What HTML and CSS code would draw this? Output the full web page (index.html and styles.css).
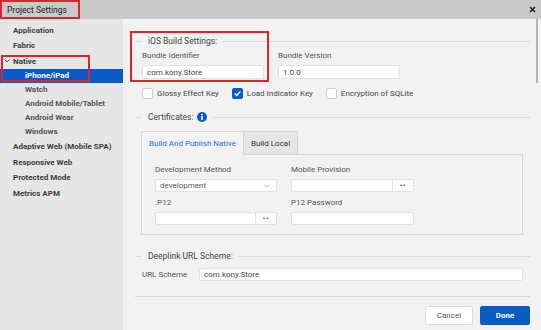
FILE: index.html
```html
<!DOCTYPE html>
<html lang="en">
<head>
  <meta charset="UTF-8">
  <title>Project Settings</title>
  <link rel="stylesheet" href="styles.css">
</head>
<body>

<div class="dialog">
  <div class="titlebar">
    <span class="title">Project Settings</span>
    <svg class="close" width="7" height="7" viewBox="0 0 7 7">
      <path d="M1 1 L6 6 M6 1 L1 6" stroke="#222" stroke-width="1.6"/>
    </svg>
  </div>

  <div class="main">
    <nav class="sidebar">
      <div class="nav-item">Application</div>
      <div class="nav-item">Fabric</div>
      <div class="nav-item native">
        <svg class="caret" width="6" height="4" viewBox="0 0 6 4">
          <path d="M0.5 0.5 L3 3 L5.5 0.5" fill="none" stroke="#555" stroke-width="1"/>
        </svg>Native
      </div>
      <div class="nav-sub selected">iPhone/iPad</div>
      <div class="nav-sub">Watch</div>
      <div class="nav-sub">Android Mobile/Tablet</div>
      <div class="nav-sub">Android Wear</div>
      <div class="nav-sub">Windows</div>
      <div class="nav-item">Adaptive Web (Mobile SPA)</div>
      <div class="nav-item">Responsive Web</div>
      <div class="nav-item">Protected Mode</div>
      <div class="nav-item">Metrics APM</div>
      <div class="mark mark-native"></div>
    </nav>

    <section class="content">
      <div class="legend"><span>iOS Build Settings:</span></div>
      <div class="field-row">
        <div class="field">
          <label>Bundle Identifier</label>
          <div class="input">com.kony.Store</div>
        </div>
        <div class="field">
          <label>Bundle Version</label>
          <div class="input">1.0.0</div>
        </div>
      </div>
      <div class="check-row">
        <span class="check"></span><span class="check-text">Glossy Effect Key</span>
        <span class="check checked">
          <svg width="9" height="9" viewBox="0 0 9 9"><path d="M1.8 4.6 L3.7 6.4 L7.3 2.6" fill="none" stroke="#fff" stroke-width="1.4"/></svg>
        </span><span class="check-text">Load Indicator Key</span>
        <span class="check"></span><span class="check-text">Encryption of SQLite</span>
      </div>

      <div class="legend legend-cert">
        <span>Certificates:
          <svg class="info" width="10" height="10" viewBox="0 0 10 10">
            <circle cx="5" cy="5" r="5" fill="#0b5bc7"/>
            <rect x="4.2" y="4.1" width="1.6" height="3.8" fill="#fff"/>
            <circle cx="5" cy="2.6" r="0.9" fill="#fff"/>
          </svg>
        </span>
      </div>

      <div class="tabs-panel">
        <div class="tabs">
          <div class="tab active">Build And Publish Native</div>
          <div class="tab">Build Local</div>
          <div class="tab-fill"></div>
        </div>
        <div class="panel-body">
          <div class="panel-row">
            <div class="field">
              <label>Development Method</label>
              <div class="input select">development
                <svg class="chev" width="6" height="4" viewBox="0 0 6 4"><path d="M0.5 0.5 L3 3 L5.5 0.5" fill="none" stroke="#bbb" stroke-width="0.9"/></svg>
              </div>
            </div>
            <div class="field wide">
              <label>Mobile Provision</label>
              <div class="input browse"><span class="fill"></span><span class="dots">••</span></div>
            </div>
          </div>
          <div class="panel-row">
            <div class="field">
              <label>.P12</label>
              <div class="input browse"><span class="fill"></span><span class="dots">••</span></div>
            </div>
            <div class="field wide">
              <label>P12 Password</label>
              <div class="input"></div>
            </div>
          </div>
        </div>
      </div>

      <div class="legend legend-deep"><span>Deeplink URL Scheme:</span></div>
      <div class="url-row">
        <label>URL Scheme</label>
        <div class="input url">com.kony.Store</div>
      </div>

      <div class="divider"></div>

      <div class="footer">
        <button class="btn cancel">Cancel</button>
        <button class="btn done">Done</button>
      </div>

      <div class="mark mark-ios"></div>
    </section>

    <div class="scrollbar"></div>
  </div>
</div>

</body>
</html>
```

FILE: styles.css
```css
body {
  margin: 0;
  font-family: Roboto, "Liberation Sans", sans-serif;
  background: #f2f2f2;
}

.dialog {
  width: 541px;
  height: 330px;
  display: flex;
  flex-direction: column;
  overflow: hidden;
}

.titlebar {
  height: 19px;
  background: #c9c9c9;
  display: flex;
  align-items: center;
  justify-content: space-between;
  padding-right: 5px;
}

.title {
  box-sizing: border-box;
  width: 80px;
  height: 19px;
  border: 2px solid #e3232b;
  padding-left: 5px;
  display: flex;
  align-items: center;
  font-size: 8.5px;
  color: #222;
}

.main {
  flex: 1;
  display: flex;
  position: relative;
}

/* sidebar */
.sidebar {
  width: 123px;
  background: #e6e6e6;
  padding-top: 3.25px;
  position: relative;
}

.nav-item,
.nav-sub {
  display: flex;
  align-items: center;
  font-size: 8px;
  font-weight: bold;
  color: #3d3d3d;
  white-space: nowrap;
}

.nav-item {
  height: 15.5px;
  padding-left: 13px;
}

.nav-item.native {
  padding-left: 4px;
}

.caret {
  margin-right: 3px;
}

.nav-sub {
  height: 14px;
  padding-left: 25px;
  color: #555;
}

.nav-sub.selected {
  background: #0b5bc7;
  color: #fff;
}

.mark {
  position: absolute;
  border: 2px solid #e3232b;
  box-sizing: border-box;
}

.mark-native {
  left: 1px;
  top: 36px;
  width: 89px;
  height: 27px;
}

/* content */
.content {
  flex: 1;
  position: relative;
  padding: 16px 11px 0 12px;
}

.mark-ios {
  left: 7px;
  top: 12px;
  width: 139px;
  height: 51px;
}

.legend {
  display: flex;
  align-items: center;
  height: 12px;
  font-size: 8.5px;
  color: #444;
}

.legend::before {
  content: "";
  width: 7px;
  border-top: 1px solid #dcdcdc;
}

.legend::after {
  content: "";
  flex: 1;
  border-top: 1px solid #dcdcdc;
}

.legend span {
  padding: 0 6px;
  display: flex;
  align-items: center;
}

.info {
  margin-left: 3px;
}

label {
  display: block;
  height: 10px;
  line-height: 10px;
  font-size: 8px;
  color: #555;
  margin-bottom: 4px;
  white-space: nowrap;
}

.input {
  box-sizing: border-box;
  height: 14px;
  background: #fff;
  border: 1px solid #e2e2e2;
  border-radius: 2px;
  display: flex;
  align-items: center;
  padding-left: 4px;
  font-size: 8px;
  color: #444;
}

.field-row {
  display: flex;
  gap: 14px;
  padding-left: 7px;
  margin-top: 4px;
}

.field {
  width: 122px;
}

.field.wide {
  width: 123px;
}

.check-row {
  display: flex;
  align-items: center;
  height: 11px;
  margin-top: 9px;
  padding-left: 7px;
  font-size: 8px;
  color: #444;
}

.check {
  box-sizing: border-box;
  width: 11px;
  height: 11px;
  border: 1px solid #cfcfcf;
  border-radius: 2px;
  background: #fff;
  display: flex;
  align-items: center;
  justify-content: center;
}

.check.checked {
  background: #0b5bc7;
  border-color: #0b5bc7;
}

.check-text {
  margin: 0 13px 0 4px;
}

.legend-cert {
  margin-top: 12px;
}

/* tabs */
.tabs-panel {
  margin: 8px 7px 0 6px;
}

.tabs {
  display: flex;
  height: 24px;
}

.tab {
  display: flex;
  align-items: center;
  padding: 0 7px;
  font-size: 8px;
  color: #333;
  border: 1px solid #d6d6d6;
  background: #e6e6e6;
  box-sizing: border-box;
}

.tab.active {
  width: 102px;
  background: #f2f2f2;
  color: #1f6fd1;
  border-bottom: none;
  border-right: none;
}

.tab-fill {
  flex: 1;
  border-bottom: 1px solid #d6d6d6;
}

.panel-body {
  border: 1px solid #d6d6d6;
  border-top: none;
  padding: 10px 0 9px 13px;
}

.panel-row {
  display: flex;
  gap: 14px;
}

.panel-row + .panel-row {
  margin-top: 6px;
}

.panel-body .input {
  height: 13px;
}

.select {
  justify-content: space-between;
  padding-right: 6px;
  color: #555;
}

.browse {
  padding-left: 0;
}

.fill {
  flex: 1;
}

.dots {
  width: 20px;
  height: 100%;
  border-left: 1px solid #e2e2e2;
  display: flex;
  align-items: center;
  justify-content: center;
  font-size: 7px;
  color: #333;
  letter-spacing: 1px;
}

.legend-deep {
  margin-top: 15px;
}

.url-row {
  display: flex;
  align-items: center;
  margin: 6px 7px 0 7px;
}

.url-row label {
  width: 57px;
  margin: 0;
}

.input.url {
  flex: 1;
  height: 13px;
}

.divider {
  margin-top: 15px;
  border-top: 1px solid #d8d8d8;
}

.footer {
  display: flex;
  justify-content: flex-end;
  gap: 7px;
  margin-top: 9px;
}

.btn {
  height: 19px;
  border-radius: 2px;
  font-family: Roboto, "Liberation Sans", sans-serif;
  font-size: 8px;
  padding: 0;
  cursor: pointer;
}

.btn.cancel {
  width: 48px;
  background: #fff;
  border: 1px solid #dcdcdc;
  color: #555;
}

.btn.done {
  width: 50px;
  background: #0b5bc7;
  border: 1px solid #0b5bc7;
  color: #fff;
  font-weight: bold;
}

.scrollbar {
  position: absolute;
  right: 3px;
  top: 0;
  width: 2.5px;
  height: 64px;
  background: #b3b3b3;
}
```
